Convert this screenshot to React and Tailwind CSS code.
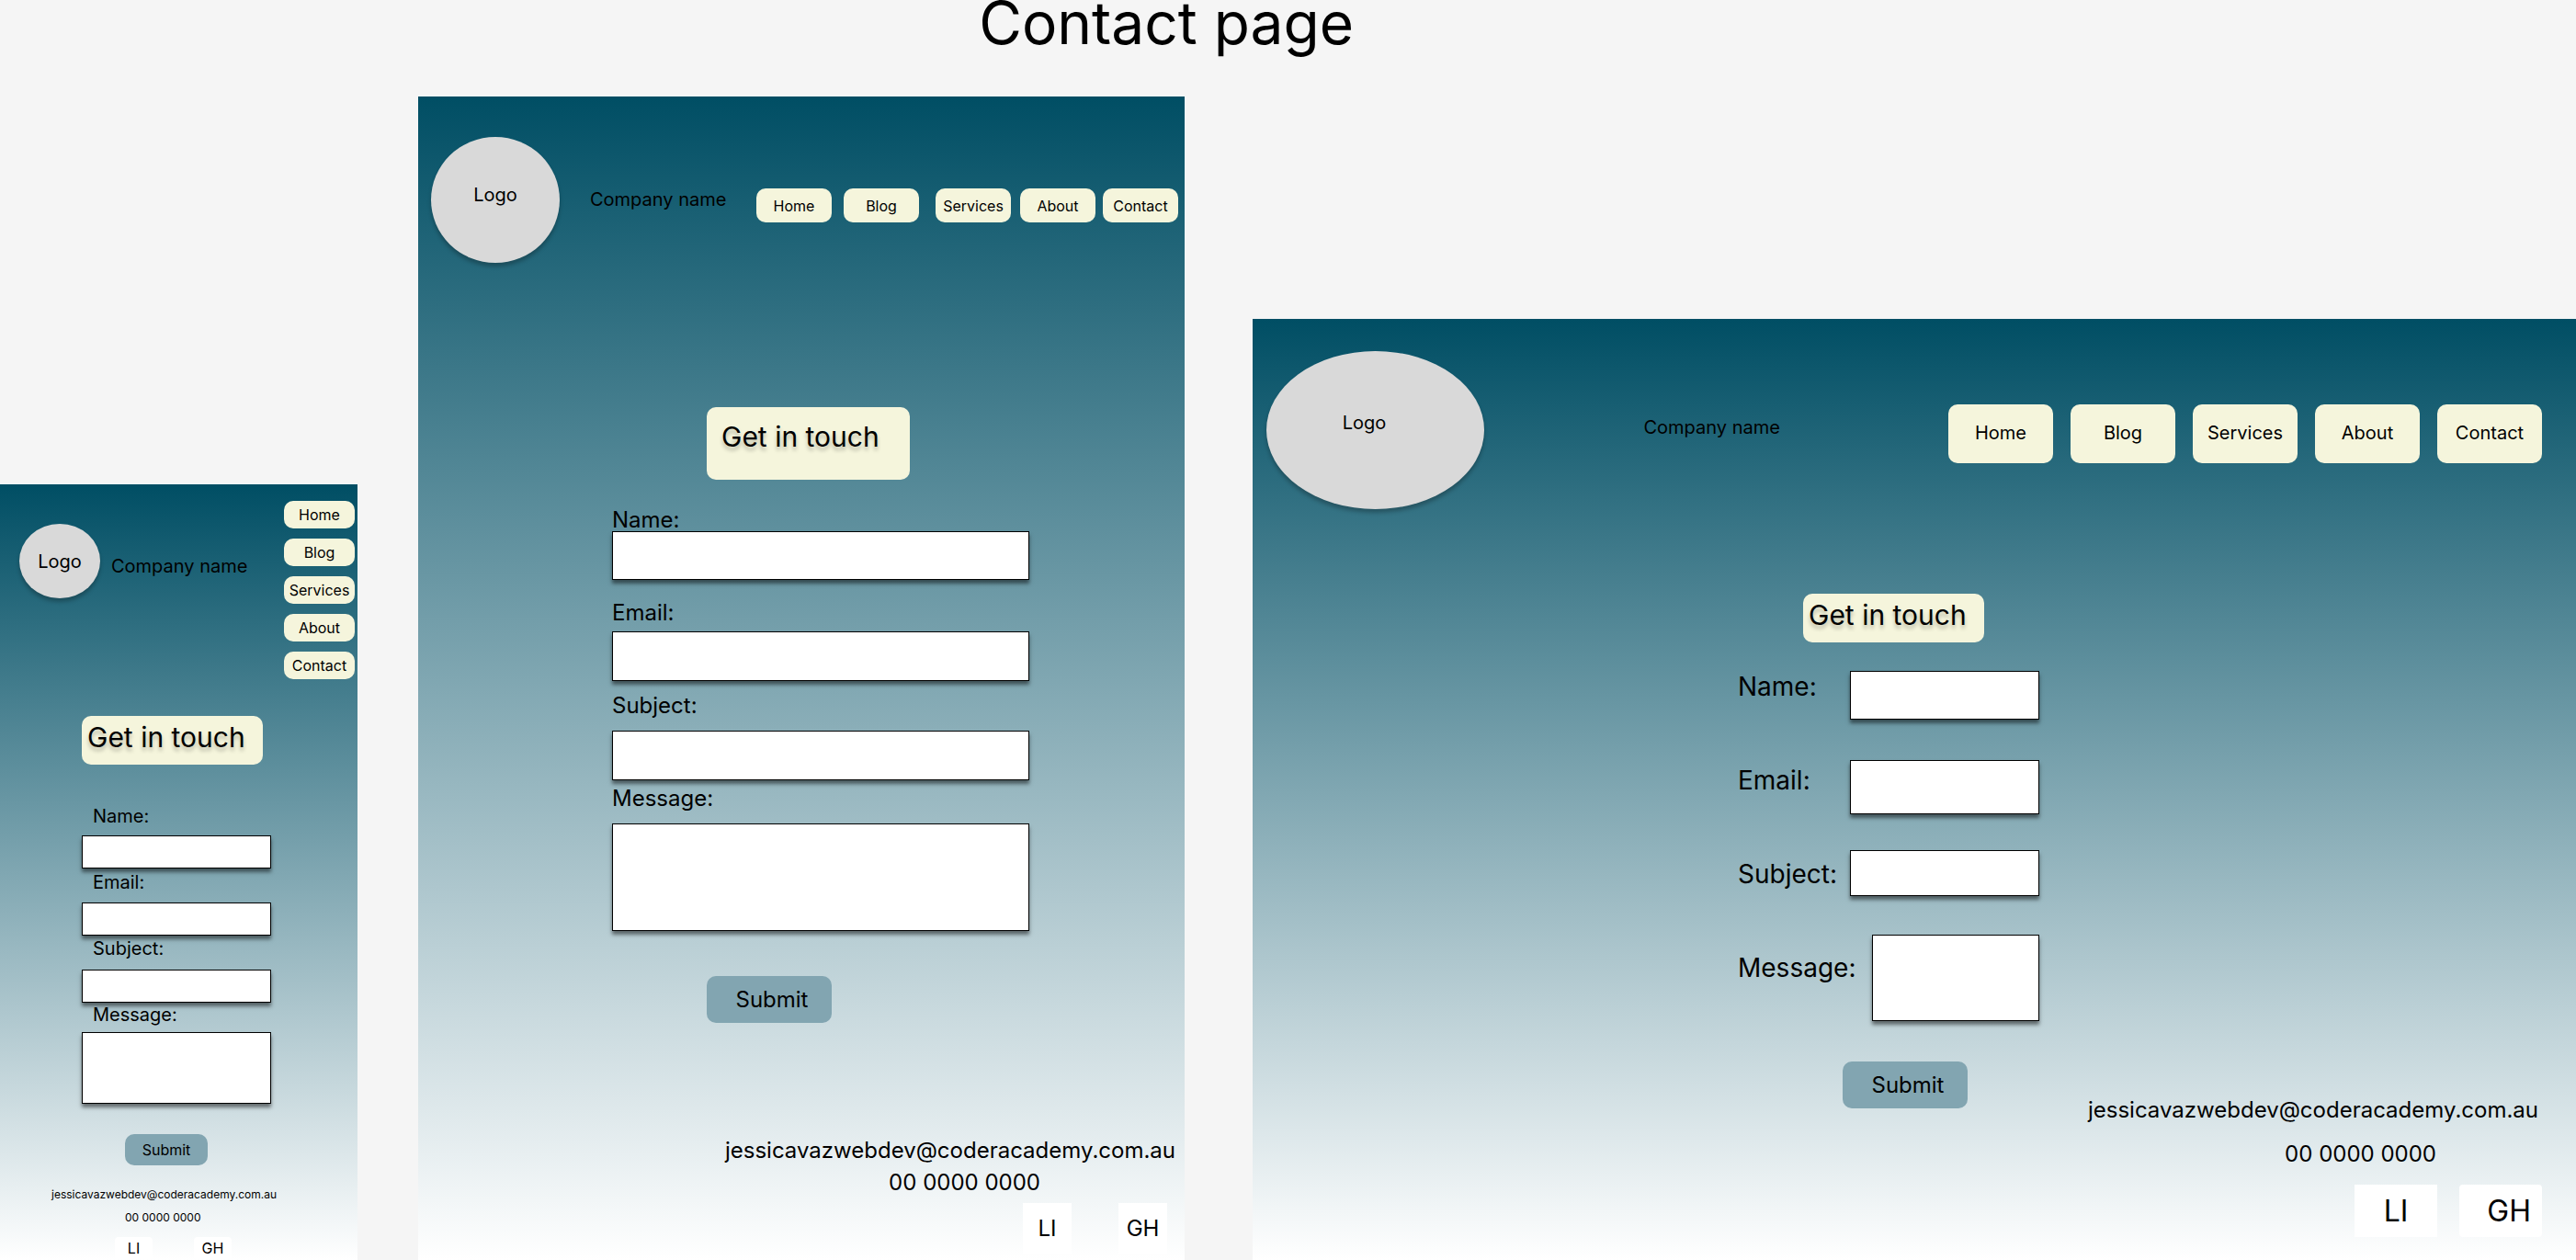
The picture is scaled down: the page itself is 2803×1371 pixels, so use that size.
import React from 'react';

const NAV = ['Home', 'Blog', 'Services', 'About', 'Contact'];
const EMAIL = 'jessicavazwebdev@coderacademy.com.au';
const PHONE = '00 0000 0000';

const FRAME = 'flex min-w-0 basis-0 flex-col bg-[linear-gradient(to_bottom,#004e64,#ffffff)]';
const FIELD =
  'block w-full resize-none rounded-none border border-black bg-white px-2 shadow-[0_4px_4px_rgba(0,0,0,0.5)] outline-none';
const LOGO =
  'flex shrink-0 items-center justify-center rounded-[50%] bg-[#d9d9d9] text-xl shadow-[0_4px_4px_rgba(0,0,0,0.25)]';
const PILL = 'flex items-center justify-center rounded-[10px] bg-[#f5f5dc]';
const SUBMIT = 'block rounded-[10px] bg-[#82a5b1]';

function Heading({ className }) {
  return (
    <h2
      className={`rounded-[10px] bg-[#f5f5dc] text-[30px] leading-9 whitespace-nowrap [text-shadow:0_4px_4px_rgba(0,0,0,0.25)] ${className}`}
    >
      Get in touch
    </h2>
  );
}

function Field({ id, label, labelClass, fieldClass, multiline }) {
  return (
    <>
      <label htmlFor={id} className={`block leading-6 ${labelClass}`}>
        {label}
      </label>
      {multiline ? (
        <textarea id={id} className={`${FIELD} ${fieldClass}`} />
      ) : (
        <input id={id} type="text" className={`${FIELD} ${fieldClass}`} />
      )}
    </>
  );
}

function MobileFrame() {
  return (
    <section className={`${FRAME} grow-[389] pt-[18px]`}>
      <header className="flex items-start pr-[3px] pl-[21px]">
        <div className={`${LOGO} mt-[25px] h-[81px] w-[88px]`}>Logo</div>
        <p className="mt-[59px] ml-3 text-xl leading-6 whitespace-nowrap">Company name</p>
        <nav className="ml-auto flex w-[77px] shrink-0 flex-col gap-[11px]">
          {NAV.map((item) => (
            <a key={item} href="#" className={`${PILL} h-[30px] text-base`}>
              {item}
            </a>
          ))}
        </nav>
      </header>
      <form className="mt-10 mr-[94px] ml-[89px]">
        <Heading className="h-[53px] w-[197px] px-1.5 pt-[5px]" />
        <Field id="m-name" label="Name:" labelClass="mt-11 pl-3 text-xl" fieldClass="mt-[9px] h-9" />
        <Field id="m-email" label="Email:" labelClass="mt-[3px] pl-3 text-xl" fieldClass="mt-2.5 h-9" />
        <Field id="m-subject" label="Subject:" labelClass="mt-0.5 pl-3 text-xl" fieldClass="mt-[11px] h-9" />
        <Field id="m-message" label="Message:" labelClass="mt-px pl-3 text-xl" fieldClass="mt-[7px] h-[78px]" multiline />
        <button type="button" className={`${SUBMIT} mt-[33px] ml-[47px] h-[34px] w-[90px] text-base`}>
          Submit
        </button>
      </form>
      <footer className="mt-[19px] flex flex-col items-start pb-px pl-14 text-xs">
        <a href={`mailto:${EMAIL}`} className="leading-[25px]">
          {EMAIL}
        </a>
        <p className="ml-20 leading-[25px]">{PHONE}</p>
        <div className="mt-[9px] ml-[69px] flex gap-[45px] text-base">
          <a href="#" className="flex h-6 w-[41px] items-center justify-center rounded-sm bg-white">
            LI
          </a>
          <a href="#" className="flex h-6 w-[41px] items-center justify-center rounded-sm bg-white">
            GH
          </a>
        </div>
      </footer>
    </section>
  );
}

const TABLET_GAPS = ['', 'ml-[13px]', 'ml-[18px]', 'ml-2.5', 'ml-2'];

function TabletFrame() {
  return (
    <section className={`${FRAME} ml-[66px] grow-[834] pt-11`}>
      <header className="flex items-start pr-[7px] pl-3.5">
        <div className={`${LOGO} h-[137px] w-[140px] pb-3`}>Logo</div>
        <p className="mt-14 ml-[33px] text-xl leading-6 whitespace-nowrap">Company name</p>
        <nav className="mt-14 ml-auto flex">
          {NAV.map((item, i) => (
            <a key={item} href="#" className={`${PILL} h-[37px] w-[82px] text-base ${TABLET_GAPS[i]}`}>
              {item}
            </a>
          ))}
        </nav>
      </header>
      <form className="mt-[157px] mr-[169px] ml-[211px]">
        <Heading className="ml-[103px] h-[79px] w-[221px] px-4 pt-3.5" />
        <Field id="t-name" label="Name:" labelClass="mt-8 text-2xl" fieldClass="h-[53px]" />
        <Field id="t-email" label="Email:" labelClass="mt-6 text-2xl" fieldClass="mt-2 h-[54px]" />
        <Field id="t-subject" label="Subject:" labelClass="mt-[15px] text-2xl" fieldClass="mt-[15px] h-[54px]" />
        <Field id="t-message" label="Message:" labelClass="mt-2 text-2xl" fieldClass="mt-[15px] h-[117px]" multiline />
        <button type="button" className={`${SUBMIT} mt-[49px] ml-[103px] h-[51px] w-[136px] pl-1.5 text-2xl`}>
          Submit
        </button>
      </form>
      <footer className="mt-[121px] flex flex-col items-end pr-2.5 pb-1.5 text-2xl">
        <a href={`mailto:${EMAIL}`} className="leading-[35px]">
          {EMAIL}
        </a>
        <p className="mr-[147px] leading-[35px]">{PHONE}</p>
        <div className="mt-[5px] mr-[9px] flex gap-[51px]">
          <a href="#" className="flex h-14 w-[53px] items-center justify-center bg-white">
            LI
          </a>
          <a href="#" className="flex h-14 w-[53px] items-center justify-center bg-white">
            GH
          </a>
        </div>
      </footer>
    </section>
  );
}

function DesktopFrame() {
  return (
    <section className={`${FRAME} ml-[74px] grow-[1440] pt-[35px]`}>
      <header className="flex items-start pr-[37px] pl-[15px]">
        <div className={`${LOGO} h-[172px] w-[237px] pr-6 pb-4`}>Logo</div>
        <p className="mt-[71px] flex-1 pl-[12.5%] text-xl leading-6 whitespace-nowrap">Company name</p>
        <nav className="mt-[58px] flex gap-[19px]">
          {NAV.map((item) => (
            <a key={item} href="#" className={`${PILL} h-16 w-[114px] pb-0.5 text-xl`}>
              {item}
            </a>
          ))}
        </nav>
      </header>
      <div className="mt-[92px] flex justify-between pr-[37px] pb-[25px] pl-[527px]">
        <form className="w-[329px] pb-[140px]">
          <Heading className="ml-[72px] h-[53px] w-[197px] px-1.5 pt-[5px]" />
          <div className="mt-[31px] flex">
            <div className="flex w-[123px] flex-col gap-[68px] pl-px text-[28px] leading-[34px] whitespace-nowrap">
              <label htmlFor="d-name">Name:</label>
              <label htmlFor="d-email">Email:</label>
              <label htmlFor="d-subject">Subject:</label>
              <label htmlFor="d-message">Message:</label>
            </div>
            <div className="flex flex-1 flex-col">
              <input id="d-name" type="text" className={`${FIELD} h-[53px]`} />
              <input id="d-email" type="text" className={`${FIELD} mt-11 h-[59px]`} />
              <input id="d-subject" type="text" className={`${FIELD} mt-[39px] h-[50px]`} />
              <div className="mt-[42px] pl-6">
                <textarea id="d-message" className={`${FIELD} h-[94px]`} />
              </div>
            </div>
          </div>
          <button type="button" className={`${SUBMIT} mt-11 ml-[115px] h-[51px] w-[136px] pl-1.5 text-2xl`}>
            Submit
          </button>
        </form>
        <footer className="flex flex-col items-end gap-[19px] self-end text-2xl leading-[29px]">
          <a href={`mailto:${EMAIL}`} className="mr-1 leading-[29px]">
            {EMAIL}
          </a>
          <p className="mr-[115px] leading-[29px]">{PHONE}</p>
          <div className="flex gap-6 text-[32px]">
            <a href="#" className="flex h-[57px] w-[90px] items-center justify-center bg-white">
              LI
            </a>
            <a href="#" className="flex h-[57px] w-[90px] items-center justify-end rounded-sm bg-white pr-3">
              GH
            </a>
          </div>
        </footer>
      </div>
    </section>
  );
}

export default function App() {
  return (
    <div className="min-h-screen bg-[#f5f5f5] font-['Inter',sans-serif] text-black">
      <h1 className="pl-[38%] text-[64px] leading-[50px] whitespace-nowrap">Contact page</h1>
      <main className="mt-[55px] flex items-end">
        <MobileFrame />
        <TabletFrame />
        <DesktopFrame />
      </main>
    </div>
  );
}
